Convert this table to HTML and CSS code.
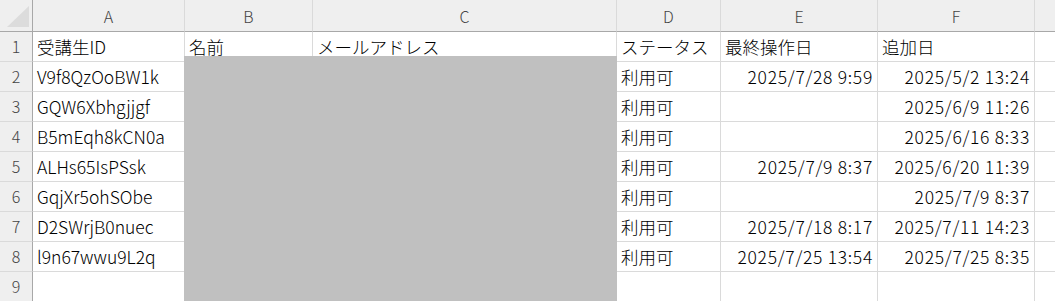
FILE: index.html
```html
<!DOCTYPE html>
<html lang="ja">
<head>
<meta charset="utf-8">
<link rel="stylesheet" href="styles.css">
</head>
<body>
<div class="sheet">
  <div class="grid">
    <div class="corner"><svg width="33" height="32" viewBox="0 0 33 32"><polygon points="7,27 29,6 29,27" fill="#dcdcdc"/></svg></div>
    <div class="colh">A</div><div class="colh">B</div><div class="colh">C</div><div class="colh">D</div><div class="colh">E</div><div class="colh">F</div><div class="colh last"></div>

    <div class="rowh">1</div><div class="c">受講生ID</div><div class="c">名前</div><div class="c">メールアドレス</div><div class="c">ステータス</div><div class="c">最終操作日</div><div class="c">追加日</div><div class="c last"></div>

    <div class="rowh">2</div><div class="c">V9f8QzOoBW1k</div><div class="c"></div><div class="c"></div><div class="c">利用可</div><div class="c r">2025/7/28 9:59</div><div class="c r">2025/5/2 13:24</div><div class="c last"></div>

    <div class="rowh">3</div><div class="c">GQW6Xbhgjjgf</div><div class="c"></div><div class="c"></div><div class="c">利用可</div><div class="c r"></div><div class="c r">2025/6/9 11:26</div><div class="c last"></div>

    <div class="rowh">4</div><div class="c">B5mEqh8kCN0a</div><div class="c"></div><div class="c"></div><div class="c">利用可</div><div class="c r"></div><div class="c r">2025/6/16 8:33</div><div class="c last"></div>

    <div class="rowh">5</div><div class="c">ALHs65IsPSsk</div><div class="c"></div><div class="c"></div><div class="c">利用可</div><div class="c r">2025/7/9 8:37</div><div class="c r">2025/6/20 11:39</div><div class="c last"></div>

    <div class="rowh">6</div><div class="c">GqjXr5ohSObe</div><div class="c"></div><div class="c"></div><div class="c">利用可</div><div class="c r"></div><div class="c r">2025/7/9 8:37</div><div class="c last"></div>

    <div class="rowh">7</div><div class="c">D2SWrjB0nuec</div><div class="c"></div><div class="c"></div><div class="c">利用可</div><div class="c r">2025/7/18 8:17</div><div class="c r">2025/7/11 14:23</div><div class="c last"></div>

    <div class="rowh">8</div><div class="c">l9n67wwu9L2q</div><div class="c"></div><div class="c"></div><div class="c">利用可</div><div class="c r">2025/7/25 13:54</div><div class="c r">2025/7/25 8:35</div><div class="c last"></div>

    <div class="rowh">9</div><div class="c"></div><div class="c"></div><div class="c"></div><div class="c"></div><div class="c r"></div><div class="c r"></div><div class="c last"></div>
  </div>
  <div class="redact"></div>
</div>
</body>
</html>
```

FILE: styles.css
```css
html, body {
  margin: 0;
  padding: 0;
  background: #ffffff;
}
body {
  width: 1055px;
  height: 301px;
  overflow: hidden;
  font-family: "Noto Sans CJK JP", "Noto Sans", sans-serif;
}
.sheet {
  position: relative;
  width: 1055px;
  height: 301px;
  overflow: hidden;
}
.grid {
  display: grid;
  grid-template-columns: 33px 152px 128px 304px 104px 157px 157px 1fr;
  grid-template-rows: 32px repeat(9, 30px);
}
.grid > div {
  box-sizing: border-box;
}
.corner {
  background: #efefef;
  border-right: 1px solid #a8a8a8;
  border-bottom: 1px solid #a8a8a8;
}
.corner svg {
  display: block;
}
.colh {
  background: #efefef;
  border-right: 1px solid #dadada;
  border-bottom: 1px solid #a8a8a8;
  color: #444444;
  font-size: 16px;
  font-weight: 300;
  display: flex;
  align-items: center;
  justify-content: center;
  padding-top: 1px;
}
.rowh {
  background: #efefef;
  border-right: 1px solid #a8a8a8;
  border-bottom: 1px solid #dadada;
  color: #444444;
  font-size: 16px;
  font-weight: 300;
  display: flex;
  align-items: flex-end;
  justify-content: center;
  padding-bottom: 3px;
}
.c {
  border-right: 1px solid #dadada;
  border-bottom: 1px solid #dadada;
  color: #000000;
  font-size: 17.5px;
  font-weight: 300;
  display: flex;
  align-items: flex-end;
  padding: 0 4px 2px 4px;
  white-space: nowrap;
  overflow: hidden;
}
.c.r {
  justify-content: flex-end;
  letter-spacing: 0.7px;
}
.last {
  border-right: none;
}
.redact {
  position: absolute;
  left: 184px;
  top: 56px;
  width: 433px;
  height: 245px;
  background: #c0c0c0;
}
```
